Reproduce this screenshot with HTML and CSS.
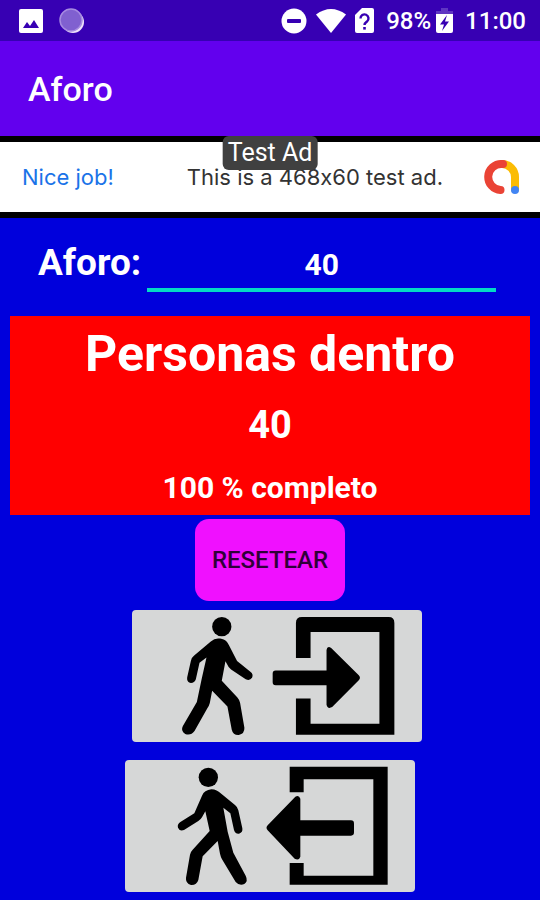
FILE: index.html
```html
<!DOCTYPE html>
<html lang="es">
<head>
  <meta charset="UTF-8" />
  <meta name="viewport" content="width=device-width, initial-scale=1.0" />
  <title>Aforo</title>
  <link rel="stylesheet" href="styles.css">
</head>
<body>

  <!-- Barra de estado -->
  <div class="status-bar">
    <div class="status-left">
      <svg width="24" height="24" viewBox="0 0 24 24">
        <rect x="0" y="0" width="24" height="24" rx="2" fill="#fff"/>
        <path d="M4 19l4-6 3 4 4-6 5 8z" fill="#3700b3"/>
      </svg>
      <svg width="26" height="26" viewBox="0 0 26 26">
        <circle cx="14" cy="14" r="11" fill="#eee0fb"/>
        <circle cx="12" cy="12" r="11" fill="#8060d0" stroke="#a68be0" stroke-width="1.5"/>
      </svg>
    </div>
    <div class="status-right">
      <svg width="26" height="26" viewBox="0 0 26 26">
        <circle cx="13" cy="13" r="12.5" fill="#fff"/>
        <rect x="6" y="11" width="14" height="4" rx="1" fill="#3700b3"/>
      </svg>
      <svg width="30" height="24" viewBox="0 0 30 24">
        <path d="M0 5.500Q15-5.500 30 5.500L15 24z" fill="#fff"/>
      </svg>
      <svg width="19" height="25" viewBox="0 0 19 25">
        <path d="M7 0h10a2 2 0 0 1 2 2v21a2 2 0 0 1-2 2H2a2 2 0 0 1-2-2V7z" fill="#fff"/>
        <path d="M5.500 10.500a4 4 0 1 1 6.500 3c-1.600 1.200-2.500 1.700-2.500 3.500" fill="none" stroke="#3700b3" stroke-width="2.400"/>
        <rect x="8.200" y="19" width="2.600" height="2.600" fill="#3700b3"/>
      </svg>
      <span class="battery-text">98%</span>
      <svg width="17" height="25" viewBox="0 0 17 25">
        <path d="M5 0h7v3h5v6H0V3h5z" fill="#5f35c2"/>
        <path d="M0 6h17v17a2 2 0 0 1-2 2H2a2 2 0 0 1-2-2z" fill="#fff"/>
        <path d="M11 7l-7 9.500h4L6 23l7-9.500H9z" fill="#3700b3"/>
      </svg>
      <span class="clock">11:00</span>
    </div>
  </div>

  <header class="app-bar">
    <h1>Aforo</h1>
  </header>

  <!-- Anuncio -->
  <div class="ad">
    <span class="ad-badge">Test Ad</span>
    <span class="ad-title">Nice job!</span>
    <span class="ad-text">This is a 468x60 test ad.</span>
    <svg width="36" height="36" viewBox="0 0 36 36" fill="none" stroke-width="8" stroke-linecap="round">
      <path d="M18 5A13 13 0 0 1 31 18V30" stroke="#fbbc04"/>
      <path d="M19 5H18A13 13 0 0 0 16.500 31" stroke="#ea4335"/>
      <circle cx="31" cy="31" r="4" fill="#4285f4"/>
    </svg>
  </div>

  <main>
    <div class="aforo-row">
      <label for="aforo">Aforo:</label>
      <input type="text" id="aforo" inputmode="numeric" value="40" />
    </div>

    <section class="panel">
      <h2>Personas dentro</h2>
      <p class="count" id="count">40</p>
      <p class="percent" id="percent">100 % completo</p>
    </section>

    <div class="actions">
      <button type="button" class="reset-btn">RESETEAR</button>

      <button type="button" class="door-btn door-in" aria-label="Entrar">
        <svg viewBox="36 30 872 396">
          <circle cx="306" cy="80" r="29"/>
          <path d="M295 116C313 116 322 124 328 137L352 183L392 216Q402 224 397 234Q390 244 378 238L334 209Q326 203 322 193L317 184L306 243L353 293Q359 300 361 309L374 384Q375 402 357 406Q340 407 336 390L323 320L277 273L270 310Q268 318 263 325L224 394Q213 409 196 403Q181 394 189 379L231 307L245 240L260 173L239 189L228 238Q223 251 210 249Q200 245 202 232L213 183Q215 173 223 167L273 125Q283 116 295 116Z"/>
          <path d="M529 174V69Q529 51 547 51H808Q825 51 825 69V405H529V296H573V372H780V96H573V174Z"/>
          <path d="M468 212H621V150Q623 137 635 144L718 226Q725 233 718 241L638 322Q624 329 621 315V256H468Q459 256 459 247V221Q459 212 468 212Z"/>
        </svg>
      </button>

      <button type="button" class="door-btn" aria-label="Salir">
        <svg viewBox="16 30 870 396">
          <circle cx="266" cy="82" r="29"/>
          <path d="M275 118C287 118 296 124 303 130L346 165Q354 171 356 181L368 235Q370 248 358 251Q346 252 343 240L332 190L311 173L324 245L341 308L378 377Q386 393 374 402Q360 409 348 396L307 328Q303 320 301 311L294 273L249 319L236 390Q231 406 214 405Q197 400 199 383L211 314Q213 305 219 299L270 243L257 184L247 202Q243 209 236 213L193 240Q180 245 175 233Q172 224 181 217L224 190L247 137Q254 120 275 118Z"/>
          <path d="M510 127V50H804V404H510V339H552V377H761V88H552V127Z"/>
          <path d="M694 211H542V146Q538 134 527 140L444 226Q437 234 444 241L525 326Q538 333 542 320V257H694Q703 257 703 247V221Q703 211 694 211Z"/>
        </svg>
      </button>
    </div>
  </main>

  <script>
    const aforo = document.getElementById("aforo");
    const count = document.getElementById("count");
    const percent = document.getElementById("percent");
    let dentro = 40;

    function pintar() {
      const max = parseInt(aforo.value, 10) || 0;
      count.textContent = dentro;
      percent.textContent = (max ? Math.round(dentro * 100 / max) : 0) + " % completo";
    }

    aforo.addEventListener("input", pintar);
    document.querySelector(".reset-btn").addEventListener("click", () => {
      dentro = 0;
      pintar();
    });
    document.querySelector("[aria-label=Entrar]").addEventListener("click", () => {
      dentro++;
      pintar();
    });
    document.querySelector("[aria-label=Salir]").addEventListener("click", () => {
      dentro = Math.max(0, dentro - 1);
      pintar();
    });
  </script>
</body>
</html>
```
FILE: styles.css
```css
* {
  box-sizing: border-box;
}

body {
  margin: 0;
  min-height: 100vh;
  font-family: Roboto, "Liberation Sans", sans-serif;
  background-color: #0000dc;
  color: white;
}

h1, h2, p {
  margin: 0;
}

svg {
  display: block;
}

.status-bar {
  display: flex;
  justify-content: space-between;
  align-items: center;
  padding: 0 14px 0 19px;
  height: 41px;
  background-color: #3700b3;
  font-size: 24px;
  font-weight: 500;
}

.status-left {
  display: flex;
  align-items: center;
  gap: 16px;
}

.status-right {
  display: flex;
  align-items: center;
  gap: 9px;
}

.battery-text {
  margin: 0 -4px 0 3px;
}

.clock {
  margin-left: 3px;
}

.app-bar {
  display: flex;
  align-items: center;
  height: 95px;
  padding: 0 28px;
  background-color: #6200ee;
}

.app-bar h1 {
  font-size: 34px;
  font-weight: 500;
}

.ad {
  position: relative;
  display: flex;
  justify-content: space-between;
  align-items: center;
  height: 82px;
  padding: 0 20px 0 22px;
  border: solid black;
  border-width: 6px 0;
  background-color: white;
  font-family: Inter, "Open Sans", sans-serif;
  font-feature-settings: "calt" 0;
  font-size: 22px;
}

.ad-title {
  color: #1a73e8;
}

.ad-text {
  margin-left: 32px;
  color: #333;
}

.ad-badge {
  position: absolute;
  top: -6px;
  left: 50%;
  transform: translateX(-50%);
  padding: 0 5px;
  border-radius: 6px;
  background-color: #404040;
  color: white;
  font-family: Roboto, sans-serif;
  font-size: 25px;
  line-height: 34px;
  white-space: nowrap;
}

.aforo-row {
  display: flex;
  align-items: baseline;
  gap: 6px;
  padding: 20px 44px 24px 38px;
}

.aforo-row label {
  font-size: 37px;
  font-weight: bold;
}

.aforo-row input {
  flex: 1;
  min-width: 0;
  height: 54px;
  padding: 3px 0 0;
  border: none;
  border-bottom: 4px solid #03dac5;
  background: none;
  color: white;
  font-family: inherit;
  font-size: 30px;
  font-weight: bold;
  text-align: center;
  outline: none;
}

.panel {
  margin: 0 10px;
  padding: 7px 0 4px;
  background-color: #ff0000;
  font-weight: bold;
  text-align: center;
}

.panel h2 {
  font-size: 50px;
  line-height: 62px;
}

.count {
  font-size: 38px;
  line-height: 80px;
}

.percent {
  font-size: 30px;
  line-height: 46px;
}

.actions {
  display: flex;
  flex-direction: column;
  align-items: center;
  padding: 4px 0 8px;
}

.reset-btn {
  margin-bottom: 9px;
  padding: 0 17px;
  height: 82px;
  border: none;
  border-radius: 14px;
  background-color: #f010ff;
  color: #300038;
  font-family: inherit;
  font-size: 24px;
  font-weight: 500;
  cursor: pointer;
}

.door-btn {
  width: 290px;
  max-width: 100%;
  padding: 0;
  border: none;
  border-radius: 4px;
  background-color: #d6d7d7;
  cursor: pointer;
}

.door-in {
  margin: 0 0 18px 14px;
}
```
